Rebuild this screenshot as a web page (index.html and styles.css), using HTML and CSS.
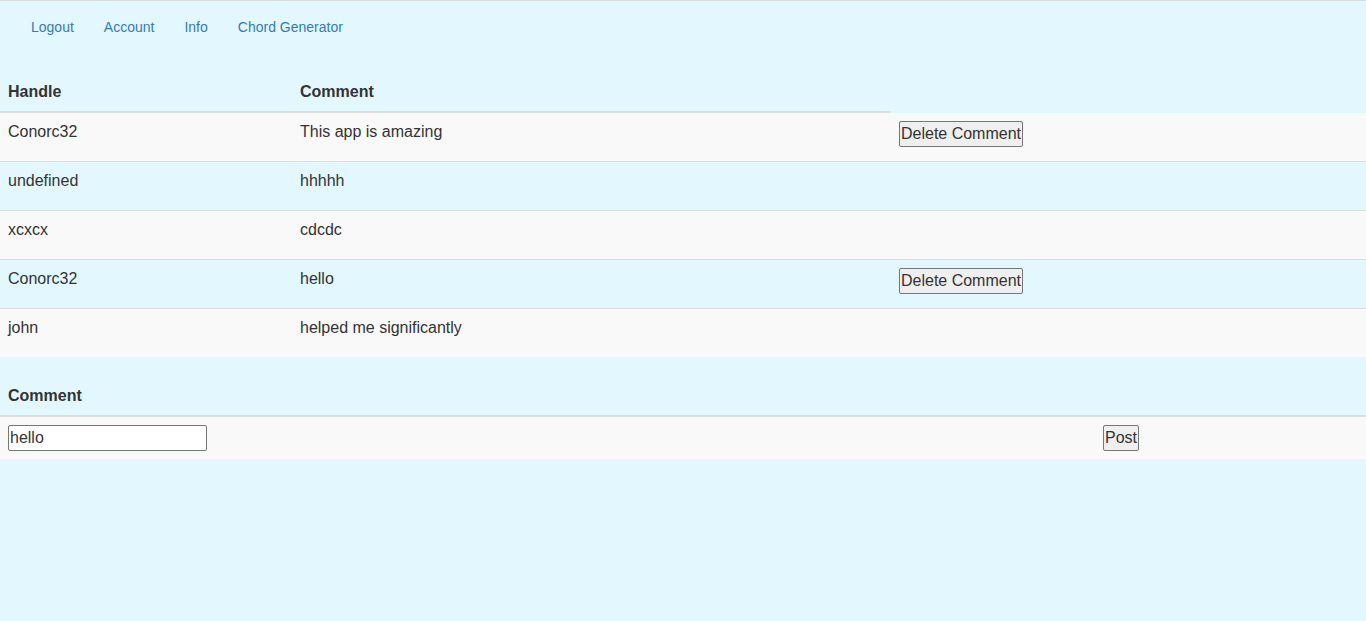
FILE: index.html
```html
<!DOCTYPE html>
<html>
<head>
<meta charset="utf-8">
<link rel="stylesheet" href="styles.css">
</head>
<body>
<nav class="topnav">
  <ul class="nav-list">
    <li><a href="#">Logout</a></li>
    <li><a href="#">Account</a></li>
    <li><a href="#">Info</a></li>
    <li><a href="#">Chord Generator</a></li>
  </ul>
</nav>
<table class="grid comments">
  <colgroup><col class="c1"><col class="c2"><col class="c3"></colgroup>
  <thead>
    <tr><th>Handle</th><th>Comment</th></tr>
  </thead>
  <tbody>
    <tr><td>Conorc32</td><td>This app is amazing</td><td><button class="btn del">Delete Comment</button></td></tr>
    <tr><td>undefined</td><td>hhhhh</td><td></td></tr>
    <tr><td>xcxcx</td><td>cdcdc</td><td></td></tr>
    <tr><td>Conorc32</td><td>hello</td><td><button class="btn del">Delete Comment</button></td></tr>
    <tr><td>john</td><td>helped me significantly</td><td></td></tr>
  </tbody>
</table>
<table class="grid post">
  <colgroup><col class="p1"><col class="p2"></colgroup>
  <thead>
    <tr><th>Comment</th><th></th></tr>
  </thead>
  <tbody>
    <tr><td><input class="field" type="text" value="hello"></td><td><button class="btn postbtn">Post</button></td></tr>
  </tbody>
</table>
</body>
</html>
```
FILE: styles.css
```css
html, body {
  margin: 0;
  padding: 0;
}
body {
  background: #e3f8fe;
  font-family: "Liberation Sans", Arial, sans-serif;
  color: #333;
  height: 621px;
}
.topnav {
  border-top: 1px solid #d8dcdd;
}
.nav-list {
  list-style: none;
  margin: 0;
  padding: 0 0 0 16px;
  display: flex;
}
.nav-list a {
  display: block;
  padding: 16px 15px 14px;
  font-size: 14px;
  line-height: 20px;
  color: #337ab7;
  text-decoration: none;
}
.grid {
  width: 1366px;
  table-layout: fixed;
  border-collapse: separate;
  border-spacing: 0;
  font-size: 16px;
  line-height: 20px;
}
.comments {
  margin-top: 22px;
}
.post {
  margin-top: 20px;
}
.c1 { width: 292px; }
.c2 { width: 599px; }
.c3 { width: 475px; }
.p1 { width: 1095px; }
.p2 { width: 271px; }
.grid th {
  text-align: left;
  font-weight: bold;
  height: 20px;
  padding: 9px 8px 9px;
  border-bottom: 2px solid #dddddd;
  vertical-align: top;
}
.grid td {
  padding: 9px 8px 8px;
  height: 31px;
  vertical-align: top;
  border-bottom: 1px solid #dddddd;
}
.grid tbody tr:last-child td {
  border-bottom: 0;
}
.grid tbody tr:nth-child(odd) td {
  background: #f9f9f9;
}
.post td {
  padding-top: 8px;
  height: 26px;
}
.btn {
  font-family: "Liberation Sans", Arial, sans-serif;
  font-size: 16px;
  color: #333;
  background: #efefef;
  border: 1px solid #767676;
  border-radius: 2px;
  height: 26px;
  padding: 0;
  margin: 0;
  box-sizing: border-box;
  line-height: 22px;
  white-space: nowrap;
  vertical-align: top;
}
.del {
  width: 124px;
  margin-top: -1px;
}
.postbtn {
  width: 36px;
}
.field {
  width: 199px;
  height: 26px;
  box-sizing: border-box;
  margin: 0;
  border: 1px solid #767676;
  border-radius: 2px;
  padding: 0 1px;
  font-family: "Liberation Sans", Arial, sans-serif;
  font-size: 16px;
  color: #333;
  background: #fff;
  vertical-align: top;
}
```
